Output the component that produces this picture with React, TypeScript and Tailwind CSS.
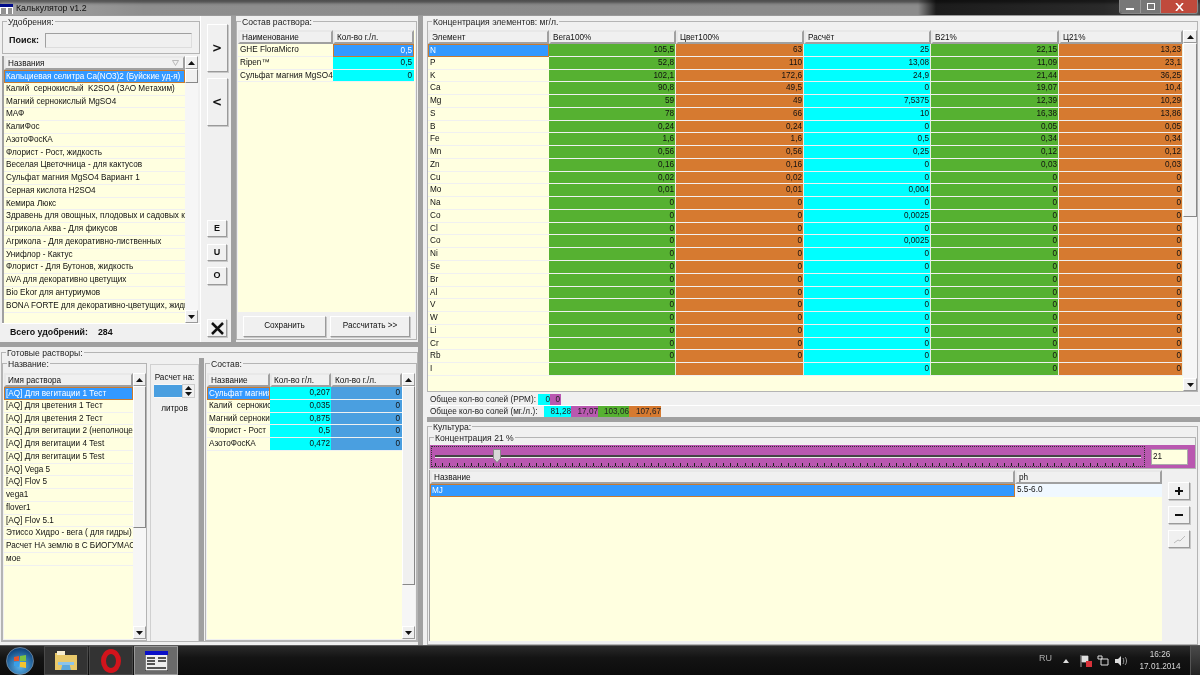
import React from 'react';

const ROW = 'h-[12.78px] leading-[12px] border-b border-[#f0f0f0] overflow-hidden whitespace-pre';
const SELECTED = 'h-[12.78px] leading-[11px] bg-[#3399ff] text-white border border-[#c87a30] pl-px overflow-hidden whitespace-pre';

const fertilizers = [
  'Кальциевая селитра Ca(NO3)2 (Буйские уд-я)',
  'Калий  сернокислый  K2SO4 (ЗАО Метахим)',
  'Магний сернокислый MgSO4',
  'МАФ',
  'КалиФос',
  'АзотоФосКА',
  'Флорист - Рост, жидкость',
  'Веселая Цветочница - для кактусов',
  'Сульфат магния MgSO4 Вариант 1',
  'Серная кислота H2SO4',
  'Кемира Люкс',
  'Здравень для овощных, плодовых и садовых культур',
  'Агрикола Аква - Для фикусов',
  'Агрикола - Для декоративно-лиственных',
  'Унифлор - Кактус',
  'Флорист - Для Бутонов, жидкость',
  'AVA для декоративно цветущих',
  'Bio Ekor для антуриумов',
  'BONA FORTE для декоративно-цветущих, жидкое',
];

const solutions = [
  '[AQ] Для вегитации 1 Тест',
  '[AQ] Для цветения 1 Тест',
  '[AQ] Для цветения 2 Тест',
  '[AQ] Для вегитации 2 (неполноценный)',
  '[AQ] Для вегитации 4 Test',
  '[AQ] Для вегитации 5 Test',
  '[AQ] Vega 5',
  '[AQ] Flov 5',
  'vega1',
  'flover1',
  '[AQ] Flov 5.1',
  'Этиссо Хидро - вега ( для гидры)',
  'Расчет НА землю в С БИОГУМАСОМ',
  'мое',
];

const solutionParts = [
  ['Сульфат магния', '0,207', '0'],
  ['Калий  сернокислый', '0,035', '0'],
  ['Магний сернокислый', '0,875', '0'],
  ['Флорист - Рост', '0,5', '0'],
  ['АзотоФосКА', '0,472', '0'],
];

const elements = [
  ['N', '105,5', '63', '25', '22,15', '13,23'],
  ['P', '52,8', '110', '13,08', '11,09', '23,1'],
  ['K', '102,1', '172,6', '24,9', '21,44', '36,25'],
  ['Ca', '90,8', '49,5', '0', '19,07', '10,4'],
  ['Mg', '59', '49', '7,5375', '12,39', '10,29'],
  ['S', '78', '66', '10', '16,38', '13,86'],
  ['B', '0,24', '0,24', '0', '0,05', '0,05'],
  ['Fe', '1,6', '1,6', '0,5', '0,34', '0,34'],
  ['Mn', '0,56', '0,56', '0,25', '0,12', '0,12'],
  ['Zn', '0,16', '0,16', '0', '0,03', '0,03'],
  ['Cu', '0,02', '0,02', '0', '0', '0'],
  ['Mo', '0,01', '0,01', '0,004', '0', '0'],
  ['Na', '0', '0', '0', '0', '0'],
  ['Co', '0', '0', '0,0025', '0', '0'],
  ['Cl', '0', '0', '0', '0', '0'],
  ['Co', '0', '0', '0,0025', '0', '0'],
  ['Ni', '0', '0', '0', '0', '0'],
  ['Se', '0', '0', '0', '0', '0'],
  ['Br', '0', '0', '0', '0', '0'],
  ['Al', '0', '0', '0', '0', '0'],
  ['V', '0', '0', '0', '0', '0'],
  ['W', '0', '0', '0', '0', '0'],
  ['Li', '0', '0', '0', '0', '0'],
  ['Cr', '0', '0', '0', '0', '0'],
  ['Rb', '0', '0', '0', '0', '0'],
  ['I', '', '', '0', '0', '0'],
];

function Group({ title, className, children }: { title: string; className: string; children?: React.ReactNode }) {
  return (
    <fieldset className={`border border-[#b4b4b4] min-w-0 ${className}`}>
      <legend className="ml-1 px-px pt-[2px] text-[8.6px] leading-[9px] text-[#222]">{title}</legend>
      {children}
    </fieldset>
  );
}

function HeadCell({ className, children }: { className: string; children?: React.ReactNode }) {
  return (
    <div className={`h-[14px] shrink-0 bg-[#f0f0f0] border-2 border-[#a0a0a0] border-l-[#e8e8e8] border-t-[#e8e8e8] pl-0.5 leading-[11px] whitespace-nowrap overflow-hidden ${className}`}>
      {children}
    </div>
  );
}

function Arrow({ down }: { down?: boolean }) {
  return (
    <svg width="7" height="4" viewBox="0 0 7 4" className="block">
      <path d={down ? 'M0 0h7L3.5 4z' : 'M3.5 0L7 4H0z'} fill="#111" />
    </svg>
  );
}

function ScrollBtn({ down }: { down?: boolean }) {
  return (
    <div className="h-[13px] shrink-0 bg-[#f0f0f0] border border-[#fff] border-r-[#999] border-b-[#999] flex items-center justify-center">
      <Arrow down={down} />
    </div>
  );
}

function Scrollbar({ className, thumb }: { className: string; thumb: string }) {
  return (
    <div className={`flex flex-col shrink-0 bg-[#f6f6f6] ${className}`}>
      <ScrollBtn />
      <div className={`shrink-0 bg-[#f0f0f0] border border-[#fff] border-r-[#888] border-b-[#888] ${thumb}`} />
      <div className="flex-1" />
      <ScrollBtn down />
    </div>
  );
}

function RaisedButton({ className, children }: { className: string; children?: React.ReactNode }) {
  return (
    <div className={`bg-[#f0f0f0] border border-[#fff] border-r-[#9a9a9a] border-b-[#9a9a9a] shadow-[1px_1px_0_#c8c8c8] flex items-center justify-center shrink-0 ${className}`}>
      {children}
    </div>
  );
}

function ListRow({ text, selected }: { text: string; selected?: boolean }) {
  return <div className={selected ? SELECTED : `${ROW} pl-0.5`}>{text}</div>;
}

function FertilizerPanel() {
  return (
    <div className="w-[200px] shrink-0 flex flex-col pl-0.5">
      <Group title="Удобрения:" className="h-[38px] shrink-0">
        <div className="flex items-center h-[26px] pl-[6px] gap-1.5">
          <b className="w-[30px] text-[9px] leading-none">Поиск:</b>
          <div className="w-[147px] h-[15px] bg-[#f0f0f0] border border-[#a0a0a0] border-b-[#ddd] border-r-[#ddd]" />
        </div>
      </Group>
      <div className="flex h-[267px] shrink-0 mt-0.5 border-l-2 border-[#a0a0a0]">
        <div className="w-[181px] flex flex-col bg-[#ffffe0]">
          <HeadCell className="flex justify-between items-center pr-1">
            Названия
            <svg width="7" height="6" viewBox="0 0 7 6"><path d="M.5.5h6L3.5 5.5z" fill="none" stroke="#aaa" strokeWidth="0.8" /></svg>
          </HeadCell>
          {fertilizers.map((f, i) => <ListRow key={i} text={f} selected={i === 0} />)}
        </div>
        <Scrollbar className="w-[13px]" thumb="h-[14px]" />
      </div>
      <div className="h-[18px] shrink-0 flex items-center pl-[8px] gap-2.5 font-bold text-[8.8px] border-t border-[#fff]">
        <span>Всего удобрений:</span>
        <span>284</span>
      </div>
    </div>
  );
}

function MoveButtons() {
  return (
    <div className="w-[31px] shrink-0 flex flex-col items-center pt-2 pl-[2px] border-l border-[#fff]">
      <RaisedButton className="w-[21px] h-[48px] font-bold text-[12px] font-['DejaVu_Sans',sans-serif]">&gt;</RaisedButton>
      <RaisedButton className="w-[21px] h-[48px] mt-1.5 font-bold text-[12px] font-['DejaVu_Sans',sans-serif]">&lt;</RaisedButton>
      <RaisedButton className="w-[20px] h-[17px] mt-[94px] font-bold text-[9px]">E</RaisedButton>
      <RaisedButton className="w-[20px] h-[17px] mt-[7px] font-bold text-[9px]">U</RaisedButton>
      <RaisedButton className="w-[20px] h-[18px] mt-[6px] font-bold text-[9px]">O</RaisedButton>
      <RaisedButton className="w-[20px] h-[18px] mt-[34px]">
        <svg width="13" height="13" viewBox="0 0 13 13"><path d="M1 1l11 11M12 1L1 12" stroke="#111" strokeWidth="2.5" /></svg>
      </RaisedButton>
    </div>
  );
}

function CompositionPanel() {
  const rows = [['GHE FloraMicro', '0,5'], ['Ripen™', '0,5'], ['Сульфат магния MgSO4', '0']];
  return (
    <div className="w-[181px] shrink-0">
      <Group title="Состав раствора:" className="h-[324px]">
        <div className="h-[282px] mt-[3px] mx-px bg-[#ffffe0] flex flex-col">
          <div className="flex">
            <HeadCell className="w-[95px]">Наименование</HeadCell>
            <HeadCell className="w-[81px]">Кол-во г./л.</HeadCell>
          </div>
          {rows.map((r, i) => (
            <div key={i} className="flex">
              <div className={`${ROW} w-[95px] pl-0.5`}>{r[0]}</div>
              <div className={i === 0 ? 'h-[12.78px] w-[81px] leading-[11px] text-right pr-px text-white bg-[#3399ff] border border-[#c87a30]' : `${ROW} w-[81px] text-right pr-0.5 bg-[#00ffff]`}>{r[1]}</div>
            </div>
          ))}
        </div>
        <div className="flex gap-[4px] pl-[6px] pt-[4px]">
          <RaisedButton className="w-[83px] h-[21px]">Сохранить</RaisedButton>
          <RaisedButton className="w-[80px] h-[21px]">Рассчитать &gt;&gt;</RaisedButton>
        </div>
      </Group>
    </div>
  );
}

function SolutionsPanel() {
  return (
    <Group title="Готовые растворы:" className="h-[295px] ml-px">
      <div className="flex h-[283px]">
        <Group title="Название:" className="w-[145px] shrink-0">
          <div className="flex h-[266px] mt-[4px] mx-px">
            <div className="w-[129px] bg-[#ffffe0] flex flex-col">
              <HeadCell className="w-full">Имя раствора</HeadCell>
              {solutions.map((s, i) => <ListRow key={i} text={s} selected={i === 0} />)}
            </div>
            <Scrollbar className="w-[13px]" thumb="h-[142px]" />
          </div>
        </Group>
        <div className="w-[49px] shrink-0 ml-[3px] mt-[6px] border border-[#d0d0d0] border-b-0 flex flex-col items-center pt-[7px]">
          <div className="leading-[11px] whitespace-nowrap">Расчет на:</div>
          <div className="flex mt-px h-[14px]">
            <div className="w-[28px] bg-[#4a9fe0] border-y border-[#f8f8f8]" />
            <div className="w-[13px] flex flex-col justify-between bg-[#f0f0f0] py-px items-center border border-[#ccc]">
              <Arrow />
              <Arrow down />
            </div>
          </div>
          <div className="mt-[5px] leading-[11px]">литров</div>
        </div>
        <div className="w-[5px] shrink-0 bg-[#a0a0a0]" />
        <Group title="Состав:" className="w-[212px] shrink-0 ml-px">
          <div className="flex h-[266px] mt-[4px] mx-px">
            <div className="w-[195px] bg-[#ffffe0] flex flex-col">
              <div className="flex">
                <HeadCell className="w-[63px]">Название</HeadCell>
                <HeadCell className="w-[61px]">Кол-во г/л.</HeadCell>
                <HeadCell className="w-[71px]">Кол-во г./л.</HeadCell>
              </div>
              {solutionParts.map((p, i) => (
                <div key={i} className="flex">
                  <div className={i === 0 ? `${SELECTED} w-[63px]` : `${ROW} w-[63px] pl-0.5`}>{p[0]}</div>
                  <div className={`${ROW} w-[61px] bg-[#00ffff] text-right pr-px`}>{p[1]}</div>
                  <div className={`${ROW} w-[71px] bg-[#4a9fe0] text-right pr-0.5`}>{p[2]}</div>
                </div>
              ))}
            </div>
            <Scrollbar className="w-[13px]" thumb="h-[199px]" />
          </div>
        </Group>
      </div>
    </Group>
  );
}

const columnBg = ['', 'bg-[#56b131]', 'bg-[#d67a30]', 'bg-[#00ffff]', 'bg-[#56b131]', 'bg-[#d67a30]'];
const columnWidth = ['w-[121px]', 'w-[127px]', 'w-[128px]', 'w-[127px]', 'w-[128px]', 'w-[124px]'];

function ElementsTable() {
  const heads = ['Элемент', 'Вега100%', 'Цвет100%', 'Расчёт', 'В21%', 'Ц21%'];
  return (
    <Group title="Концентрация элементов: мг/л." className="h-[376px] shrink-0 mr-0.5">
      <div className="flex h-[361px] mt-[3px]">
        <div className="w-[755px] shrink-0 bg-[#ffffe0] flex flex-col">
          <div className="flex">
            {heads.map((h, i) => <HeadCell key={h} className={columnWidth[i]}>{h}</HeadCell>)}
          </div>
          {elements.map((row, r) => (
            <div key={r} className="flex">
              {row.map((cell, c) => {
                if (c === 0) {
                  return r === 0
                    ? <div key={c} className={`${SELECTED} w-[121px]`}>{cell}</div>
                    : <div key={c} className={`${ROW} w-[121px] pl-0.5`}>{cell}</div>;
                }
                return <div key={c} className={`${ROW} ${columnWidth[c]} ${columnBg[c]} text-right pr-px border-r border-r-[#e8efe0]`}>{cell}</div>;
              })}
            </div>
          ))}
        </div>
        <Scrollbar className="w-[14px]" thumb="h-[174px]" />
      </div>
    </Group>
  );
}

function SaltStats() {
  return (
    <div className="shrink-0 pl-[3px] leading-[11px] text-[#222] whitespace-nowrap">
      <div className="h-[12px] mt-[2px] flex items-center border-b border-[#fff]">
        <span className="w-[108px]">Общее кол-во солей (PPM):</span>
        <span className="w-[12px] bg-[#00ffff] text-right">0</span>
        <span className="w-[11px] bg-[#b958b0] text-right pr-px">0</span>
      </div>
      <div className="h-[11px] flex items-center">
        <span className="w-[114px]">Общее кол-во солей (мг./л.):</span>
        <span className="w-[27px] bg-[#00ffff] text-right">81,28</span>
        <span className="w-[27px] bg-[#b958b0] text-right">17,07</span>
        <span className="w-[31px] bg-[#56b131] text-right">103,06</span>
        <span className="w-[32px] bg-[#d67a30] text-right">107,67</span>
      </div>
    </div>
  );
}

function CulturePanel() {
  return (
    <Group title="Культура:" className="flex-1 min-h-0 -mt-px mr-0.5">
      <div className="flex flex-col h-[209px]">
        <Group title="Концентрация 21 %" className="h-[37px] shrink-0 mx-px">
          <div className="h-[23px] mt-[2px] bg-[#b958b0] flex items-center">
            <div className="relative w-[714px] h-[21px] ml-px border border-dotted border-[#333]">
              <div className="mt-[8px] mx-[3px] h-[2px] bg-[#444] border-b border-[#eee] box-content" />
              <div className="mt-[5px] mx-[3px] h-[3px] bg-[repeating-linear-gradient(90deg,#222_0,#222_1px,transparent_1px,transparent_7.2px)]" />
              <svg width="8" height="14" viewBox="0 0 8 14" className="absolute left-[61px] top-[2px]">
                <path d="M.5.5h7v9L4 13.5.5 9.5z" fill="#d8d8d8" stroke="#888" />
              </svg>
            </div>
            <div className="ml-[6px] w-[37px] h-[16px] bg-[#ffffe0] border border-[#aaa] pl-px leading-[14px]">21</div>
          </div>
        </Group>
        <div className="flex flex-1 min-h-0 ml-px mt-px">
          <div className="w-[733px] shrink-0 bg-[#ffffe0] flex flex-col border-l border-[#a0a0a0]">
            <div className="flex">
              <HeadCell className="w-[585px]">Название</HeadCell>
              <HeadCell className="w-[147px]">ph</HeadCell>
            </div>
            <div className="flex">
              <div className="w-[585px] h-[13px] leading-[11px] bg-[#3399ff] text-white border border-[#c87a30] pl-px">MJ</div>
              <div className="w-[147px] h-[13px] leading-[12px] bg-[#f0f8ff] pl-0.5">5.5-6.0</div>
            </div>
          </div>
          <div className="flex-1 flex flex-col pl-[6px] pt-[12px] gap-[6px]">
            <RaisedButton className="w-[22px] h-[18px]">
              <svg width="8" height="8" viewBox="0 0 8 8"><path d="M4 0v8M0 4h8" stroke="#111" strokeWidth="2" /></svg>
            </RaisedButton>
            <RaisedButton className="w-[22px] h-[18px]">
              <svg width="8" height="8" viewBox="0 0 8 8"><path d="M0 4h8" stroke="#111" strokeWidth="2" /></svg>
            </RaisedButton>
            <RaisedButton className="w-[22px] h-[18px]">
              <svg width="13" height="9" viewBox="0 0 13 9"><path d="M1 8l4-3 2 1 5-5" fill="none" stroke="#bbb" strokeWidth="1" /></svg>
            </RaisedButton>
          </div>
        </div>
      </div>
    </Group>
  );
}

function TitleBar() {
  return (
    <div className="h-[16px] shrink-0 flex justify-between bg-[linear-gradient(90deg,#a6a6a6_0,#8e8e8e_12%,#8a8a8a_50%,#8c8c8c_76.5%,#1c1c1c_78%,#2a2a2a_92%,#555_100%)] shadow-[inset_0_3px_3px_rgba(0,0,0,0.45)] border-b border-[#999]">
      <div className="flex items-center gap-[3px] pt-[3px]">
        <svg width="13" height="10" viewBox="0 0 13 10">
          <rect width="13" height="10" fill="#fff" />
          <rect width="13" height="3" fill="#000b8a" />
          <path d="M1 5h5M1 7h5M1 9h5M8 5h4M8 7h4M8 9h4" stroke="#222" />
        </svg>
        <span className="text-[8.8px] text-[#111]">Калькулятор v1.2</span>
      </div>
      <div className="flex h-[14px] mr-0.5 border border-[#888] border-t-0 rounded-b-[3px] overflow-hidden">
        <div className="w-[21px] bg-[#777] flex items-end justify-center pb-[3px] border-r border-[#999]"><div className="w-[8px] h-[2px] bg-white" /></div>
        <div className="w-[20px] bg-[#777] flex items-center justify-center border-r border-[#999]"><div className="w-[8px] h-[7px] border border-white" /></div>
        <div className="w-[36px] bg-[#c04a3c] flex items-center justify-center">
          <svg width="9" height="8" viewBox="0 0 9 8"><path d="M1 0l7 8M8 0L1 8" stroke="#fff" strokeWidth="1.6" /></svg>
        </div>
      </div>
    </div>
  );
}

function Taskbar() {
  return (
    <div className="h-[30px] shrink-0 flex items-center bg-[linear-gradient(180deg,#2a2a2a_0,#141414_40%,#0c0c0c_100%)] border-t border-[#5a5a5a] text-[#d8d8d8]">
      <svg width="30" height="28" viewBox="0 0 30 28" className="ml-[5px]">
        <defs>
          <radialGradient id="orb" cx="50%" cy="70%" r="65%">
            <stop offset="0" stopColor="#5cb6ee" />
            <stop offset="1" stopColor="#10447c" />
          </radialGradient>
        </defs>
        <circle cx="15" cy="14" r="13.5" fill="url(#orb)" stroke="#9ab" strokeWidth="0.6" />
        <path d="M9 10l5-1v5H9z" fill="#e8542a" />
        <path d="M15 9l6-1v6h-6z" fill="#7cc242" />
        <path d="M9 15h5v5l-5-1z" fill="#3aa0e8" />
        <path d="M15 15h6v6l-6-1z" fill="#f4c430" />
      </svg>
      <div className="ml-[9px] w-[44px] h-[29px] flex items-center justify-center bg-[#333] border border-[#4a4a4a]">
        <svg width="26" height="23" viewBox="0 0 26 23">
          <path d="M2 4h8l2 2h12v15H2z" fill="#e8c86a" />
          <path d="M4 2h8v4H4z" fill="#f6edd0" />
          <path d="M8 21l2-8h6l2 8z" fill="#5ca8dc" />
          <path d="M5 13h16v3H5z" fill="#8cc4ea" />
        </svg>
      </div>
      <div className="ml-px w-[44px] h-[29px] flex items-center justify-center bg-[#333] border border-[#4a4a4a]">
        <svg width="22" height="24" viewBox="0 0 22 24">
          <ellipse cx="11" cy="12" rx="7.5" ry="9.5" fill="none" stroke="#d2141c" strokeWidth="5" />
        </svg>
      </div>
      <div className="ml-px w-[44px] h-[29px] flex items-center justify-center bg-[#6a6a6a] border border-[#999]">
        <svg width="23" height="20" viewBox="0 0 23 20">
          <rect width="23" height="20" fill="#eee" stroke="#111" />
          <rect width="23" height="4" fill="#0a10c8" />
          <path d="M2 7h8M2 10h8M2 13h8M13 7h8M13 10h8M2 17h19" stroke="#222" strokeWidth="1.4" />
        </svg>
      </div>
      <div className="flex-1" />
      <span className="text-[9px] mb-1 text-[#aaa]">RU</span>
      <svg width="6" height="4" viewBox="0 0 6 4" className="ml-[11px]"><path d="M3 0l3 4H0z" fill="#ddd" /></svg>
      <svg width="12" height="12" viewBox="0 0 12 12" className="ml-[11px]">
        <path d="M1 0v12M2 1h6v6H2z" stroke="#ddd" fill="#ddd" strokeWidth="0.7" />
        <rect x="6" y="6" width="6" height="6" fill="#d8323a" />
      </svg>
      <svg width="12" height="11" viewBox="0 0 12 11" className="ml-[5px]"><path d="M1 1h4v3H1zM4 4h7v6H4z" fill="none" stroke="#ddd" /></svg>
      <svg width="12" height="10" viewBox="0 0 12 10" className="ml-[6px]"><path d="M0 3h3l3-3v10L3 7H0z" fill="#ddd" /><path d="M8 2c1 2 1 4 0 6M10 1c2 2 2 6 0 8" fill="none" stroke="#999" /></svg>
      <div className="ml-[11px] w-[44px] text-center leading-[12px]">
        <div>16:26</div>
        <div>17.01.2014</div>
      </div>
      <div className="ml-[8px] w-[10px] h-full bg-[linear-gradient(180deg,#4a4a4a,#222)] border-l border-[#555]" />
    </div>
  );
}

export default function App() {
  return (
    <div className="w-[1200px] h-[675px] overflow-hidden flex flex-col bg-[#f0f0f0] text-[8.2px] text-[#111] font-['Liberation_Sans',sans-serif] blur-[0.3px]">
      <TitleBar />
      <div className="flex-1 min-h-0 flex">
        <div className="w-[418px] shrink-0 flex flex-col">
          <div className="h-[326px] shrink-0 flex">
            <FertilizerPanel />
            <MoveButtons />
            <div className="w-[5px] shrink-0 bg-[#a0a0a0]" />
            <CompositionPanel />
          </div>
          <div className="h-[5px] shrink-0 bg-[#a0a0a0]" />
          <SolutionsPanel />
        </div>
        <div className="w-[5px] shrink-0 bg-[#a0a0a0]" />
        <div className="flex-1 min-w-0 flex flex-col pl-[4px]">
          <ElementsTable />
          <SaltStats />
          <div className="h-[5px] shrink-0 bg-[#a0a0a0]" />
          <CulturePanel />
        </div>
      </div>
      <Taskbar />
    </div>
  );
}
